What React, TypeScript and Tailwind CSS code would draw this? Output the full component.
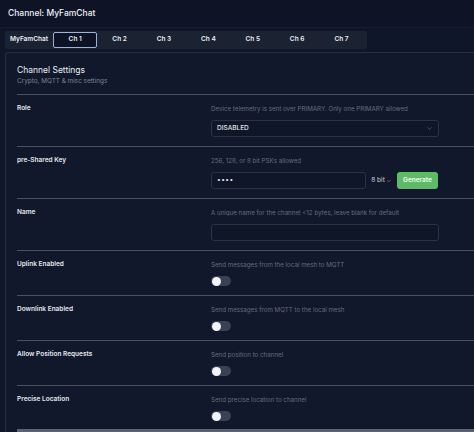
import React from 'react';
import { ChevronDown } from 'lucide-react';

const tabs = ['Ch 1', 'Ch 2', 'Ch 3', 'Ch 4', 'Ch 5', 'Ch 6', 'Ch 7'];

const Toggle: React.FC = () => (
  <div className="w-[20px] h-[10px] rounded-full bg-[#394152] flex items-center px-[1px]">
    <div className="w-[9px] h-[9px] rounded-full bg-[#f3f4f6]" />
  </div>
);

interface RowProps {
  label: string;
  desc: string;
  children: React.ReactNode;
  last?: boolean;
}

const Row: React.FC<RowProps> = ({ label, desc, children, last }) => (
  <div
    className={`flex border-t border-[#4a5162] pt-[9px] ${last ? 'pb-[8px] border-b-[3px] border-b-[#5a6170]' : 'pb-[9px]'}`}
  >
    <div className="w-[194px] shrink-0 text-[6.5px] leading-[9px] font-semibold text-[#e5e7eb]">{label}</div>
    <div className="w-[228px] shrink-0 flex flex-col">
      <div className="text-[6.2px] leading-[9px] text-[#666d7d]">{desc}</div>
      <div className="mt-[7px]">{children}</div>
    </div>
  </div>
);

export default function App() {
  return (
    <div className="w-[474px] h-[432px] overflow-hidden bg-[#10162a] flex flex-col" style={{ fontFamily: 'Inter, "Noto Sans", sans-serif' }}>
      <div className="h-[29px] px-[8px] flex items-center text-[8.5px] font-medium text-[#eef0f4] bg-[#0e1426] border-b border-[#161d30]">
        Channel: MyFamChat
      </div>

      <div className="mt-[3px] ml-[5px] w-[362px] h-[17.5px] bg-[#1b2232] rounded-[2px] flex items-center text-[6.5px] font-semibold text-[#eceef2]">
        <div className="w-[48px] text-center">MyFamChat</div>
        {tabs.map((t, i) => (
          <div
            key={t}
            className={`w-[44.4px] h-[16px] flex items-center justify-center rounded-[2px] ${
              i === 0 ? 'border border-[#9db2dc] bg-[#0d1325]' : ''
            }`}
          >
            {t}
          </div>
        ))}
      </div>

      <div className="mt-[3.5px] ml-[5px] flex-1 border-l border-t border-[#262d3d] rounded-tl-[3px] bg-[#11182b] pl-[11px]">
        <div className="pt-[12px] pb-[8.5px]">
          <div className="text-[8.5px] leading-[11px] text-[#eceef2]">Channel Settings</div>
          <div className="text-[6.4px] leading-[9px] text-[#7d8393] mt-[0.5px]">Crypto, MQTT &amp; misc settings</div>
        </div>

        <Row label="Role" desc="Device telemetry is sent over PRIMARY. Only one PRIMARY allowed">
          <div className="h-[17px] w-[228px] rounded-[3px] border border-[#2a3244] bg-[#0f1628] flex items-center justify-between px-[5px]">
            <span className="text-[6.5px] font-medium text-[#e5e7eb]">DISABLED</span>
            <ChevronDown size={7} className="text-[#6b7280]" />
          </div>
        </Row>

        <Row label="pre-Shared Key" desc="256, 128, or 8 bit PSKs allowed">
          <div className="flex items-center h-[17px]">
            <div className="h-[17px] w-[155px] rounded-[3px] border border-[#2a3244] bg-[#0f1628] flex items-center px-[5px] text-[6.5px] text-[#e5e7eb] tracking-[0.5px]">
              ••••
            </div>
            <div className="w-[31px] flex items-center justify-center gap-[1px] text-[6.5px] text-[#d1d5db]">
              8 bit <ChevronDown size={6} className="text-[#9ca3af]" />
            </div>
            <div className="h-[17px] w-[41px] rounded-[3px] bg-[#5dbb66] flex items-center justify-center text-[6.5px] font-semibold text-[#f0fdf4]">
              Generate
            </div>
          </div>
        </Row>

        <Row label="Name" desc="A unique name for the channel <12 bytes, leave blank for default">
          <div className="h-[17px] w-[228px] rounded-[3px] border border-[#2a3244] bg-[#0f1628]" />
        </Row>

        <Row label="Uplink Enabled" desc="Send messages from the local mesh to MQTT">
          <Toggle />
        </Row>
        <Row label="Downlink Enabled" desc="Send messages from MQTT to the local mesh">
          <Toggle />
        </Row>
        <Row label="Allow Position Requests" desc="Send position to channel">
          <Toggle />
        </Row>
        <Row label="Precise Location" desc="Send precise location to channel" last>
          <Toggle />
        </Row>
      </div>
    </div>
  );
}
